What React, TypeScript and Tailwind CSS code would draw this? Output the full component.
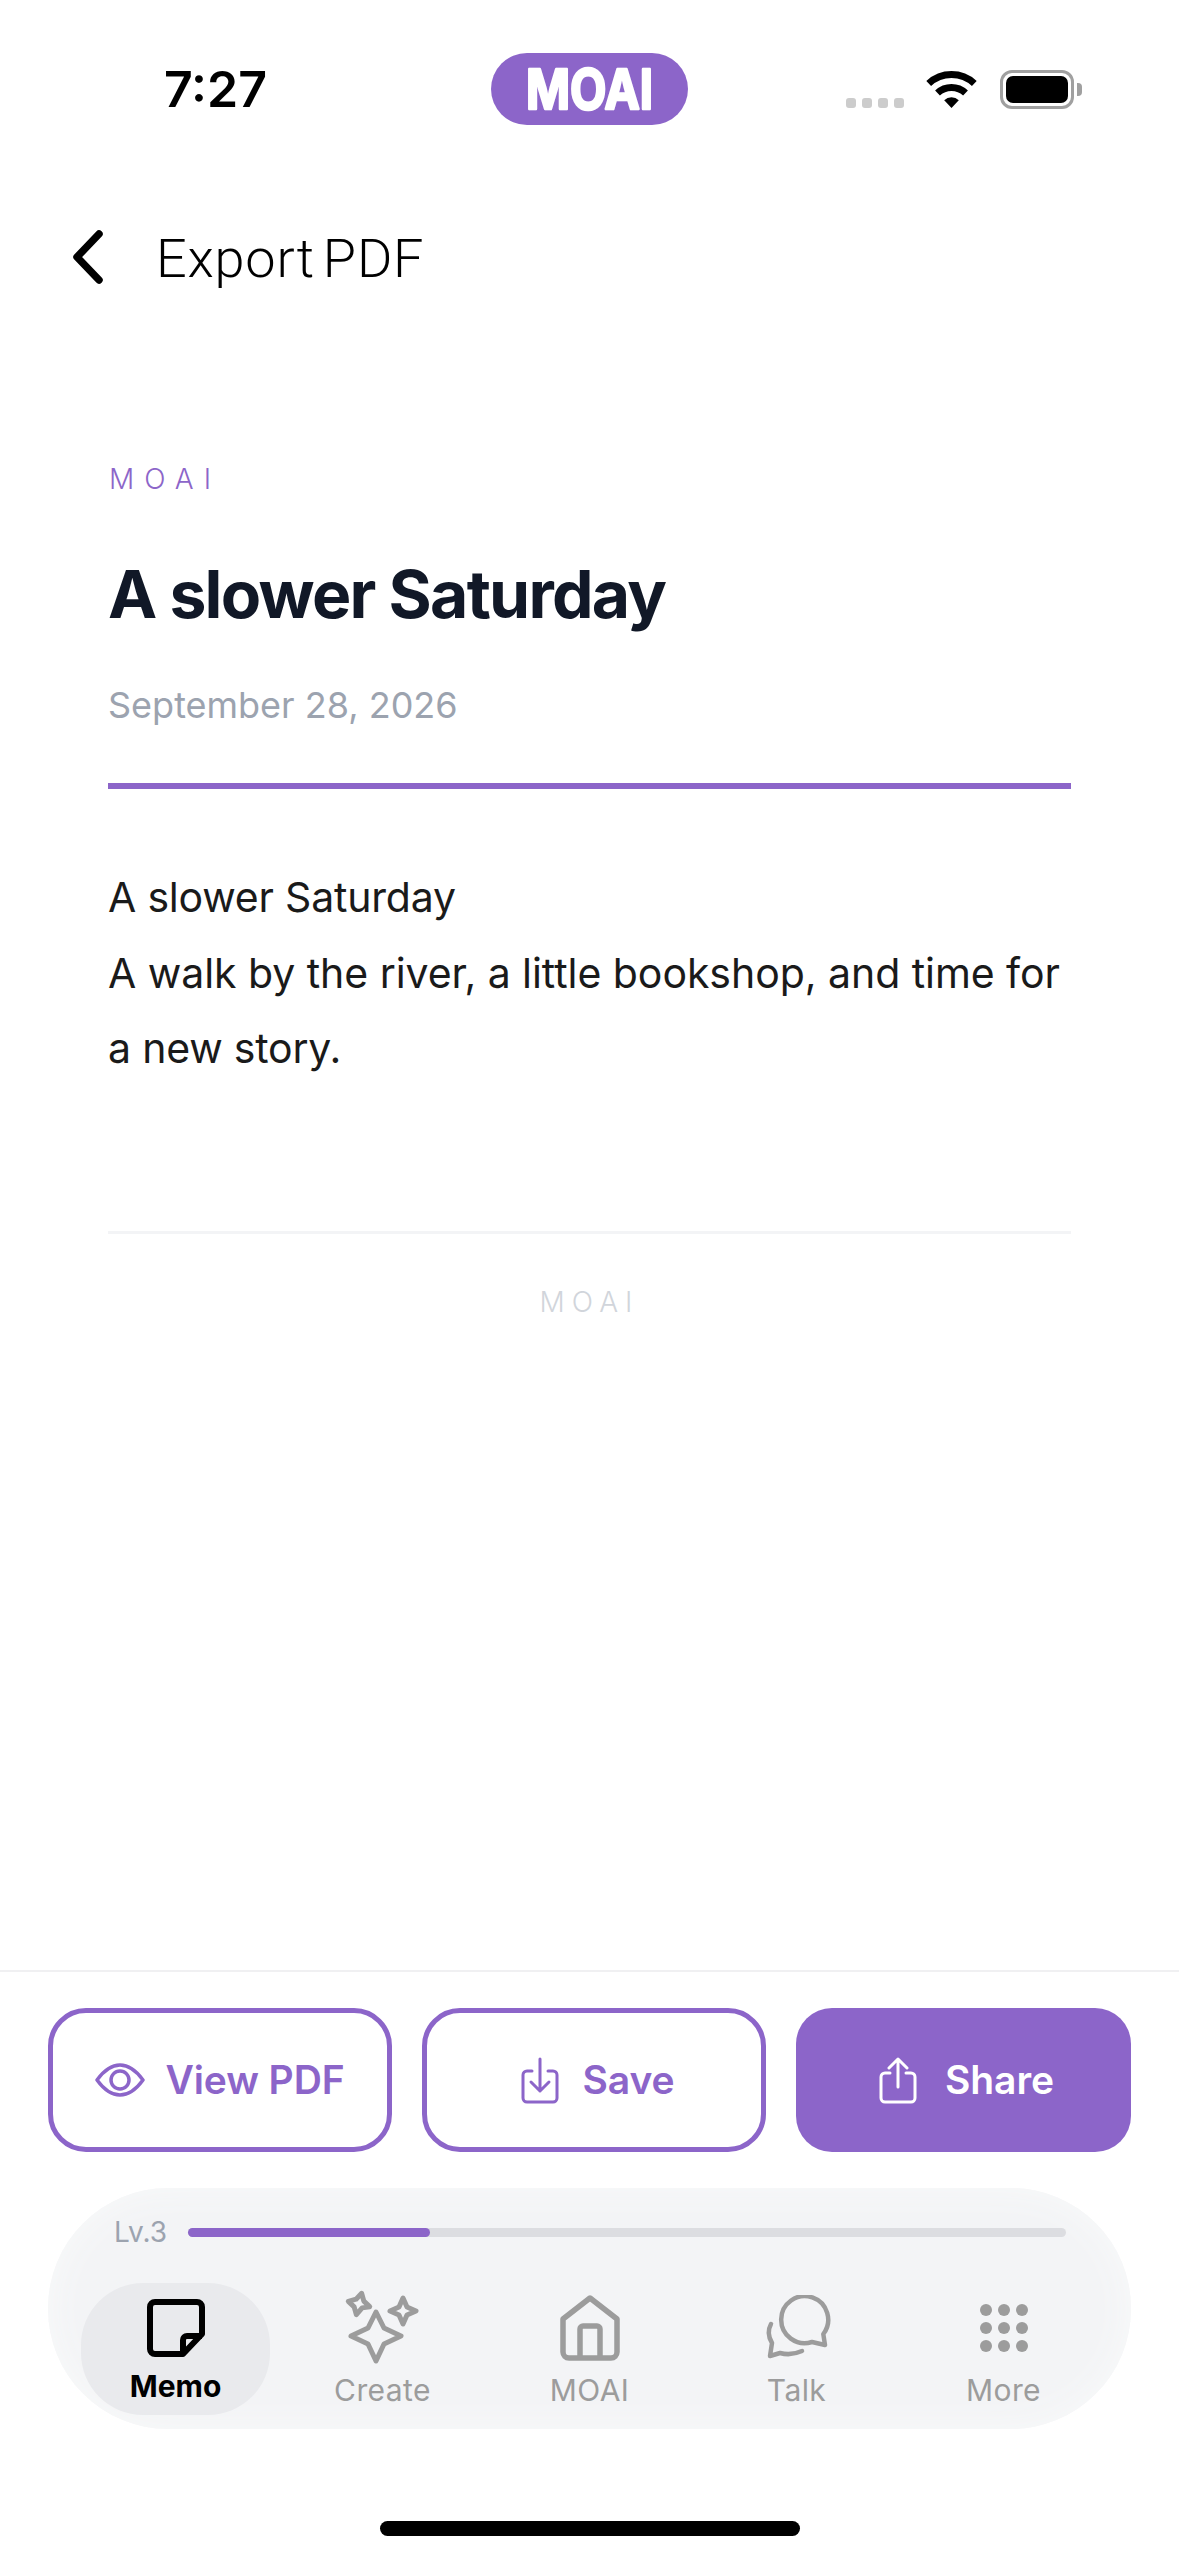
import React from 'react';

const PURPLE = '#8c65c9';

function WifiIcon() {
  return (
    <svg width="51" height="37" viewBox="0 0 51 37" fill="none" className="block">
      <path d="M2.7 12.5A33.5 33.5 0 0 1 48.3 12.5" stroke="#000" strokeWidth="7" />
      <path d="M11.5 22A20.5 20.5 0 0 1 39.5 22" stroke="#000" strokeWidth="7" />
      <path d="M25.5 37L18.2 29.2A10.5 10.5 0 0 1 32.8 29.2Z" fill="#000" />
    </svg>
  );
}

function StatusBar() {
  return (
    <div className="mt-[53px] grid h-[72px] grid-cols-[1fr_197px_1fr] items-center">
      <div className="pl-[164px] text-[50px] leading-[72px] font-semibold text-black [font-family:Inter,sans-serif]">
        7:27
      </div>
      {/* MOAI logo */}
      <div className="h-[72px] w-[197px] rounded-[36px] bg-[#8c65c9]">
        <svg width="197" height="72" viewBox="0 0 197 72" className="block">
          <text
            x="35"
            y="56"
            textLength="127"
            lengthAdjust="spacingAndGlyphs"
            fontFamily="Inter, sans-serif"
            fontWeight="700"
            fontSize="55"
            fill="#fff"
            stroke="#fff"
            strokeWidth="2.5"
            strokeLinejoin="round"
          >
            MOAI
          </text>
        </svg>
      </div>
      <div className="flex items-end justify-end pr-[105px]">
        <div className="mr-[22px] mb-[1px] flex gap-[6px]">
          <div className="h-[10px] w-[10px] rounded-[3px] bg-[#cccccc]" />
          <div className="h-[10px] w-[10px] rounded-[3px] bg-[#cccccc]" />
          <div className="h-[10px] w-[10px] rounded-[3px] bg-[#cccccc]" />
          <div className="h-[10px] w-[10px] rounded-[3px] bg-[#cccccc]" />
        </div>
        <div className="mr-[23px] mb-[1px]">
          <WifiIcon />
        </div>
        <div className="relative h-[39px] w-[74px] rounded-[12px] border-[3px] border-[#a0a0a0] p-[3px]">
          <div className="h-full w-full rounded-[7px] bg-black" />
          <div className="absolute top-[10px] right-[-11px] h-[13px] w-[5px] rounded-r-[4px] bg-[#a0a0a0]" />
        </div>
      </div>
    </div>
  );
}

function Header() {
  return (
    <div className="mt-[102px] flex h-[60px] items-center pl-[73px]">
      <svg width="30" height="54" viewBox="0 0 30 54" fill="none" className="block">
        <path d="M26 4L4 27l22 23" stroke="#000" strokeWidth="7.5" strokeLinecap="round" strokeLinejoin="round" />
      </svg>
      <div className="ml-[53px] pt-[3px] text-[54px] leading-[60px] font-light tracking-[0.8px] [word-spacing:-6px] text-black [font-family:Roboto,sans-serif]">
        Export PDF
      </div>
    </div>
  );
}

function Paper() {
  return (
    <div className="px-[108px] [font-family:Inter,sans-serif]">
      <div className="mt-[175px] pl-[1px] text-[28px] leading-[34px] font-light tracking-[0.36em] text-[#8c65c9]">MOAI</div>
      <h1 className="mt-[58px] text-[66px] leading-[80px] font-bold tracking-[-1.75px] text-[#111827]">A slower Saturday</h1>
      <div className="mt-[49px] text-[36px] leading-[44px] text-[#9ca3af]">September 28, 2026</div>
      <div className="mt-[56px] h-[6px] bg-[#8c65c9]" />
      <div className="mt-[71px] text-[41px] leading-[75.5px] tracking-[-0.05px] text-[#1a1a1a]">
        <div className="tracking-[-0.2px]">A slower Saturday</div>
        <div>A walk by the river, a little bookshop, and time for</div>
        <div className="tracking-[-0.2px]">a new story.</div>
      </div>
      <div className="mt-[144px] h-[3px] bg-[#f3f4f6]" />
      <div className="mt-[51px] text-center text-[28px] leading-[34px] font-light tracking-[0.25em] text-[#d1d5db]">MOAI</div>
    </div>
  );
}

function EyeIcon() {
  return (
    <svg width="50" height="34" viewBox="0 0 50 34" fill="none" className="block">
      <path d="M2 17C10 6 18 2 25 2s15 4 23 15c-8 11-16 15-23 15S10 28 2 17Z" stroke={PURPLE} strokeWidth="3.5" strokeLinejoin="round" />
      <circle cx="25" cy="17" r="9" stroke={PURPLE} strokeWidth="3.5" />
    </svg>
  );
}

function SaveIcon() {
  return (
    <svg width="38" height="47" viewBox="0 0 38 47" fill="none" className="block">
      <path d="M11 14H6a4 4 0 0 0-4 4v23a4 4 0 0 0 4 4h26a4 4 0 0 0 4-4V18a4 4 0 0 0-4-4h-5" stroke={PURPLE} strokeWidth="3" strokeLinecap="round" />
      <path d="M19 2v32M10 25l9 9 9-9" stroke={PURPLE} strokeWidth="3" strokeLinecap="round" strokeLinejoin="round" />
    </svg>
  );
}

function ShareIcon() {
  return (
    <svg width="38" height="47" viewBox="0 0 38 47" fill="none" className="block">
      <path d="M11 16H6a4 4 0 0 0-4 4v21a4 4 0 0 0 4 4h26a4 4 0 0 0 4-4V20a4 4 0 0 0-4-4h-5" stroke="#fff" strokeWidth="3" strokeLinecap="round" />
      <path d="M19 30V2M10 11l9-9 9 9" stroke="#fff" strokeWidth="3" strokeLinecap="round" strokeLinejoin="round" />
    </svg>
  );
}

function ActionButtons() {
  return (
    <div className="flex gap-[30px] px-[48px] pt-[36px] text-[39px] font-semibold tracking-[-0.1px] [font-family:Inter,sans-serif]">
      <button className="flex h-[144px] w-[344px] items-center justify-center gap-[20px] rounded-[38px] border-[5px] border-[#8c65c9] text-[#8c65c9]">
        <EyeIcon />
        View PDF
      </button>
      <button className="flex h-[144px] w-[344px] items-center justify-center gap-[24px] rounded-[38px] border-[5px] border-[#8c65c9] pl-[7px] text-[#8c65c9]">
        <SaveIcon />
        Save
      </button>
      <button className="flex h-[144px] flex-1 items-center justify-center gap-[28px] rounded-[36px] bg-[#8c65c9] pl-[6px] text-white">
        <ShareIcon />
        Share
      </button>
    </div>
  );
}

function MemoIcon() {
  return (
    <svg width="58" height="58" viewBox="0 0 58 58" fill="none" className="block">
      <path d="M8 3h42a5 5 0 0 1 5 5v27L36 55H8a5 5 0 0 1-5-5V8a5 5 0 0 1 5-5Z" stroke="#000" strokeWidth="6" strokeLinejoin="round" />
      <path d="M36 55V41a4 4 0 0 1 4-4h15" stroke="#000" strokeWidth="6" strokeLinejoin="round" />
    </svg>
  );
}

function CreateIcon() {
  return (
    <svg width="78" height="78" viewBox="0 0 78 78" fill="none" className="block">
      <g stroke="#9c9c9c" strokeWidth="5" strokeLinejoin="round">
        <path d="M32 23l8 16 17 8-17 8-8 17-8-17-17-8 17-8Z" />
        <path d="M15 4l4 7 7 4-7 3-4 8-4-7-7-4 7-4Z" transform="rotate(14 15 15)" />
        <path d="M59 9l4 9 9 4-9 4-4 9-4-9-9-4 9-4Z" />
      </g>
    </svg>
  );
}

function HomeIcon() {
  return (
    <svg width="60" height="66" viewBox="0 0 60 66" fill="none" className="block">
      <path d="M3 24L30 3l27 21v33a6 6 0 0 1-6 6H9a6 6 0 0 1-6-6Z" stroke="#9c9c9c" strokeWidth="5.5" strokeLinejoin="round" />
      <path d="M20 63V34a3 3 0 0 1 3-3h14a3 3 0 0 1 3 3v29" stroke="#9c9c9c" strokeWidth="5.5" />
    </svg>
  );
}

function TalkIcon() {
  return (
    <svg width="68" height="66" viewBox="0 0 68 66" fill="none" className="block">
      <path d="M60.3 39L62 50L49 47A23.5 23.5 0 1 1 60.3 39Z" stroke="#9c9c9c" strokeWidth="4.5" strokeLinejoin="round" />
      <path d="M8 29Q3 38 9 48L7 61L17 58Q28 61 39 56" stroke="#9c9c9c" strokeWidth="4.5" strokeLinecap="round" strokeLinejoin="round" />
    </svg>
  );
}

function MoreIcon() {
  const cells = [0, 1, 2, 3, 4, 5, 6, 7, 8];
  return (
    <svg width="48" height="48" viewBox="0 0 48 48" className="block">
      {cells.map((i) => (
        <circle key={i} cx={6 + (i % 3) * 18} cy={6 + Math.floor(i / 3) * 18} r="6" fill="#9c9c9c" />
      ))}
    </svg>
  );
}

function NavItem({ label, icon, active }: { label: string; icon: React.ReactNode; active?: boolean }) {
  return (
    <div className={active ? 'mx-[9px] flex h-[132px] flex-col items-center rounded-[62px] bg-[#e9eaed] pt-[6px]' : 'flex h-[132px] flex-col items-center pt-[6px]'}>
      <div className="flex h-[78px] items-center justify-center">{icon}</div>
      {active ? (
        <div className="mt-[1px] text-[30px] leading-[36px] font-bold text-black">{label}</div>
      ) : (
        <div className="mt-[5px] text-[30px] leading-[36px] tracking-[0.4px] text-[#9c9c9c]">{label}</div>
      )}
    </div>
  );
}

function BottomNav() {
  return (
    <div className="mx-[48px] mt-[36px] h-[241px] rounded-[120px] bg-[#f3f4f6] pt-[27px] shadow-[inset_0_0_36px_#f9fafa] [font-family:Inter,sans-serif]">
      <div className="flex h-[34px] items-center pr-[65px] pl-[66px]">
        <div className="w-[74px] text-[28px] leading-[34px] text-[#9ca3af]">Lv.3</div>
        <div className="h-[9px] flex-1 rounded-full bg-[#dcdde1]">
          <div className="h-full w-[242px] rounded-full bg-[#8c65c9]" />
        </div>
      </div>
      <div className="mt-[34px] grid grid-cols-5 px-[24px]">
        <NavItem label="Memo" icon={<MemoIcon />} active />
        <NavItem label="Create" icon={<CreateIcon />} />
        <NavItem label="MOAI" icon={<HomeIcon />} />
        <NavItem label="Talk" icon={<TalkIcon />} />
        <NavItem label="More" icon={<MoreIcon />} />
      </div>
    </div>
  );
}

export default function App() {
  return (
    <div className="flex h-[2556px] w-[1179px] flex-col overflow-hidden bg-white">
      <StatusBar />
      <Header />
      <Paper />
      {/* Bottom bar */}
      <div className="mt-auto">
        <div className="h-[2px] bg-[#f0f0f2]" />
        <ActionButtons />
        <BottomNav />
        <div className="mx-auto mt-[92px] mb-[20px] h-[15px] w-[420px] rounded-full bg-black" />
      </div>
    </div>
  );
}
